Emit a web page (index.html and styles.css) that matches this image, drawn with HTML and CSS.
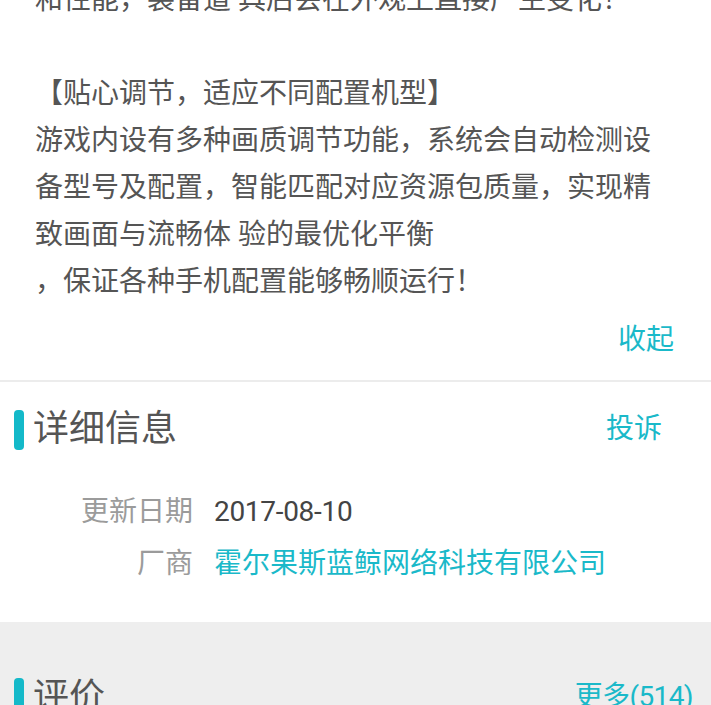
FILE: index.html
```html
<!DOCTYPE html>
<html lang="zh-CN">
<head>
    <meta charset="UTF-8">
    <meta name="viewport" content="width=device-width, initial-scale=1.0">
    <title>游戏详情</title>
    <link rel="stylesheet" href="styles.css">
</head>
<body>
    <div class="desc-section">
        <div class="desc">
            和性能，装备道 具后会在外观上直接产生变化！<br>
            <br>
            【贴心调节，适应不同配置机型】<br>
            游戏内设有多种画质调节功能，系统会自动检测设备型号及配置，智能匹配对应资源包质量，实现精致画面与流畅体 验的最优化平衡<br>
            ，保证各种手机配置能够畅顺运行！
        </div>
        <div class="fold"><a href="#">收起</a></div>
    </div>

    <div class="info-section">
        <div class="section-head">
            <span class="bar"></span>
            <h2>详细信息</h2>
            <a href="#" class="head-link">投诉</a>
        </div>
        <div class="info">
            <span class="label">更新日期</span>
            <span class="value">2017-08-10</span>
            <span class="label">厂商</span>
            <a href="#" class="value link">霍尔果斯蓝鲸网络科技有限公司</a>
        </div>
    </div>

    <div class="review-section">
        <div class="section-head review-head">
            <span class="bar"></span>
            <h2>评价</h2>
            <a href="#" class="head-link more">更多(514)</a>
        </div>
    </div>
</body>
</html>
```

FILE: styles.css
```css
/* Page base */
body {
    margin: 0;
    padding: 0;
    background-color: #fff;
    font-family: Roboto, "Noto Sans CJK SC", sans-serif;
    color: #555;
    overflow: hidden;
}

a {
    color: #1ab9c9;
    text-decoration: none;
}

/* Description block */
.desc-section {
    background-color: #fff;
    margin-top: -24px;
    padding: 0 35px 17px 35px;
    border-bottom: 2px solid #ececec;
}

.desc {
    font-size: 28px;
    line-height: 47px;
}

.fold {
    margin-top: 11px;
    text-align: right;
    font-size: 28px;
    line-height: 47px;
    padding-right: 2px;
}

/* Section header with blue bar */
.section-head {
    display: flex;
    align-items: center;
    padding: 0 49px 0 14px;
    height: 40px;
}

.bar {
    width: 10px;
    height: 40px;
    border-radius: 4px;
    background-color: #14b9c9;
    margin-right: 9px;
}

.section-head h2 {
    flex: 1;
    margin: 0 0 3px 0;
    font-size: 36px;
    line-height: 40px;
    font-weight: normal;
    color: #555;
}

.head-link {
    font-size: 28px;
    line-height: 40px;
    margin-bottom: 3px;
}

.more {
    letter-spacing: -0.6px;
}

/* Detail info */
.info-section {
    background-color: #fff;
    padding: 28px 0 32px 0;
}

.info {
    display: grid;
    grid-template-columns: 114px 1fr;
    column-gap: 21px;
    padding-left: 79px;
    margin-top: 36px;
    font-size: 28px;
    line-height: 52px;
}

.label {
    text-align: right;
    white-space: nowrap;
    color: #9b9b9b;
}

.value {
    color: #444;
    letter-spacing: -0.3px;
}

.value.link {
    color: #1ab9c9;
    letter-spacing: 0;
}

/* Review */
.review-section {
    background-color: #eeeeee;
    padding-top: 56px;
    height: 200px;
}

.review-head {
    padding-right: 18px;
}
```
